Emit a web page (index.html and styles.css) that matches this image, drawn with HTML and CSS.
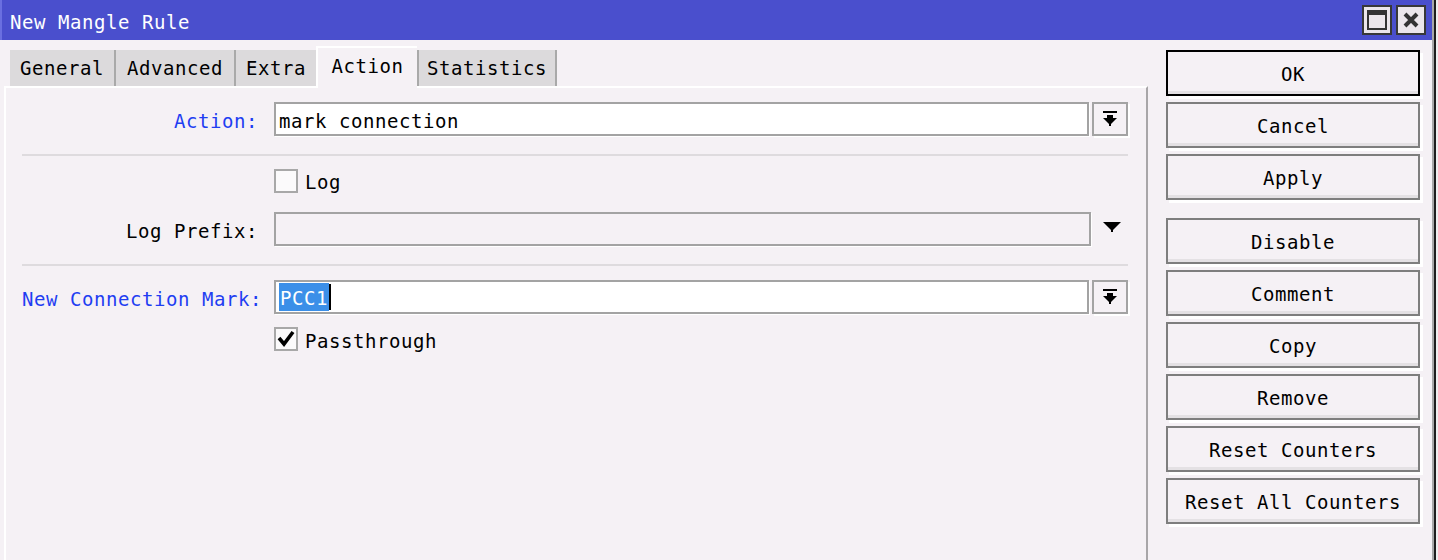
FILE: index.html
```html
<!DOCTYPE html>
<html>
<head>
<meta charset="utf-8">
<title>New Mangle Rule</title>
<link rel="stylesheet" href="styles.css">
</head>
<body>
<div class="screen">
  <div class="window">
    <div class="titlebar">
      <span class="title">New Mangle Rule</span>
      <div class="tb-btns">
        <span class="tb-btn">
          <svg width="20" height="20" viewBox="0 0 20 20"><path d="M1 1h18v18H1z" fill="none" stroke="#333" stroke-width="2"/><rect x="1" y="1" width="18" height="4" fill="#333"/></svg>
        </span>
        <span class="tb-btn">
          <svg width="16" height="16" viewBox="0 0 16 16"><path d="M2 2L14 14M14 2L2 14" stroke="#333" stroke-width="4"/></svg>
        </span>
      </div>
    </div>
    <div class="main">
      <div class="left">
        <div class="tabs">
          <span class="tab t-general">General</span>
          <span class="tab t-advanced">Advanced</span>
          <span class="tab t-extra">Extra</span>
          <span class="tab active">Action</span>
          <span class="tab t-stats">Statistics</span>
        </div>
        <div class="panel">
          <div class="row">
            <label class="lbl blue">Action:</label>
            <div class="field">
              <div class="input"><span class="txt">mark connection</span></div>
              <span class="dd-btn">
                <svg width="16" height="16" viewBox="0 0 16 16"><rect x="1" y="0" width="14" height="2" fill="#000"/><rect x="5" y="4" width="6" height="3" fill="#000"/><path d="M1 7H15L8 14Z" fill="#000"/><rect x="7" y="13" width="2" height="2" fill="#000"/></svg>
              </span>
            </div>
          </div>
          <div class="sep sep1"></div>
          <div class="row check-row">
            <span class="lbl"></span>
            <div class="check-field">
              <span class="checkbox"></span>
              <span class="check-text">Log</span>
            </div>
          </div>
          <div class="row prefix-row">
            <label class="lbl">Log Prefix:</label>
            <div class="field">
              <div class="input disabled wide"></div>
              <span class="dd-plain">
                <svg width="18" height="12" viewBox="0 0 18 12"><path d="M0 0H18L9 9Z" fill="#000"/><rect x="8" y="8" width="2" height="2" fill="#000"/></svg>
              </span>
            </div>
          </div>
          <div class="sep sep2"></div>
          <div class="row">
            <label class="lbl blue">New Connection Mark:</label>
            <div class="field">
              <div class="input"><span class="sel">PCC1</span><span class="caret"></span></div>
              <span class="dd-btn">
                <svg width="16" height="16" viewBox="0 0 16 16"><rect x="1" y="0" width="14" height="2" fill="#000"/><rect x="5" y="4" width="6" height="3" fill="#000"/><path d="M1 7H15L8 14Z" fill="#000"/><rect x="7" y="13" width="2" height="2" fill="#000"/></svg>
              </span>
            </div>
          </div>
          <div class="row check-row pass-row">
            <span class="lbl"></span>
            <div class="check-field">
              <span class="checkbox checked">
                <svg width="20" height="20" viewBox="0 0 20 20"><path d="M3 9L8 15L17 3" fill="none" stroke="#000" stroke-width="3.6"/></svg>
              </span>
              <span class="check-text">Passthrough</span>
            </div>
          </div>
        </div>
      </div>
      <div class="buttons">
        <span class="btn default">OK</span>
        <span class="btn">Cancel</span>
        <span class="btn">Apply</span>
        <span class="btn group">Disable</span>
        <span class="btn">Comment</span>
        <span class="btn">Copy</span>
        <span class="btn">Remove</span>
        <span class="btn">Reset Counters</span>
        <span class="btn">Reset All Counters</span>
      </div>
    </div>
  </div>
  <div class="edge"></div>
</div>
</body>
</html>
```
FILE: styles.css
```css
* { box-sizing: border-box; }
html, body { margin: 0; padding: 0; }
body {
  font-family: "DejaVu Sans Mono", "Liberation Mono", monospace;
  font-size: 19px;
  letter-spacing: 0.56px;
  color: #000;
  background: #f4f0f4;
}
.screen {
  display: flex;
  width: 1438px;
  height: 560px;
  overflow: hidden;
}
.window {
  width: 1432px;
  height: 560px;
  display: flex;
  flex-direction: column;
  background: #f5f1f5;
}
.titlebar {
  height: 40px;
  background: #4a4fcd;
  border-left: 2px solid #6a6fe0;
  display: flex;
  align-items: center;
  justify-content: space-between;
  padding: 0 6px 0 8px;
}
.title {
  color: #fff;
  line-height: 20px;
  padding-top: 3px;
}
.tb-btns {
  display: flex;
  gap: 4px;
}
.tb-btn {
  width: 30px;
  height: 30px;
  border: 2px solid #383838;
  background: #ebe6eb;
  display: flex;
  align-items: center;
  justify-content: center;
}
.main {
  flex: 1;
  display: flex;
}
.left {
  width: 1148px;
  padding-left: 4px;
  display: flex;
  flex-direction: column;
}
.tabs {
  height: 46px;
  display: flex;
  align-items: flex-end;
  padding-left: 6px;
}
.tab {
  height: 36px;
  line-height: 36px;
  padding: 0;
  text-align: center;
  background: #dcdadc;
  border-left: 2px solid #a9a9a9;
  white-space: nowrap;
}
.t-general { width: 104px; border-left: none; }
.t-advanced { width: 120px; }
.t-extra { width: 82px; }
.t-stats { width: 140px; border-right: 2px solid #a9a9a9; }
.tab.active {
  width: 101px;
  height: 42px;
  line-height: 36px;
  background: #f5f1f5;
  border-left: 2px solid #fff;
  border-top: 2px solid #fff;
  margin-bottom: -2px;
  position: relative;
  z-index: 1;
}
.panel {
  flex: 1;
  border-top: 2px solid #fff;
  border-left: 2px solid #fff;
  border-right: 2px solid #a8a6a8;
  padding: 14px 18px 0 16px;
  display: flex;
  flex-direction: column;
}
.row {
  display: grid;
  grid-template-columns: 236px 1fr;
  column-gap: 16px;
  align-items: center;
  height: 34px;
}
.lbl {
  text-align: right;
  white-space: nowrap;
  padding-top: 3px;
}
.lbl.blue { color: #1f3ef2; }
.field {
  display: flex;
  align-items: center;
  gap: 3px;
  height: 34px;
}
.input {
  width: 815px;
  height: 34px;
  border: 2px solid #a3a3a3;
  background: #fff;
  box-shadow: 1px 1px 0 #fff;
  padding-left: 3px;
  display: flex;
  align-items: center;
  white-space: nowrap;
}
.txt { padding-top: 3px; }
.input.disabled {
  background: #f5f1f5;
}
.input.wide { width: 817px; }
.sel {
  background: #3b8fe8;
  color: #fff;
  line-height: 26px;
  padding: 2px 1px 0;
}
.caret {
  width: 2px;
  height: 26px;
  background: #000;
}
.dd-btn {
  width: 36px;
  height: 34px;
  border: 2px solid #a3a3a3;
  background: #f5f1f5;
  box-shadow: 2px 2px 0 #fff;
  display: flex;
  align-items: center;
  justify-content: center;
}
.dd-plain {
  width: 36px;
  height: 34px;
  display: flex;
  align-items: center;
  justify-content: center;
  padding-bottom: 2px;
}
.sep {
  height: 2px;
  background: #dedbde;
}
.sep1 { margin: 18px 0 12px; }
.sep2 { margin: 18px 0 14px; }
.check-row { height: 24px; }
.prefix-row { margin-top: 20px; }
.pass-row { margin-top: 12px; height: 26px; }
.check-field {
  display: flex;
  align-items: center;
  gap: 7px;
}
.check-text { padding-top: 3px; }
.checkbox {
  width: 24px;
  height: 24px;
  border: 2px solid #a8a8a8;
  background: #fbfafb;
  display: flex;
  align-items: center;
  justify-content: center;
}
.buttons {
  padding: 10px 0 0 18px;
  display: flex;
  flex-direction: column;
  gap: 6px;
}
.btn {
  width: 254px;
  height: 46px;
  border: 2px solid #7e7e7e;
  background: #f5f1f5;
  box-shadow: inset 0 -3px 0 #e4e1e4, 3px 3px 0 #fff;
  display: flex;
  align-items: center;
  justify-content: center;
  white-space: nowrap;
  padding-top: 2px;
}
.btn.default { border-color: #000; }
.btn.group { margin-top: 12px; }
.edge {
  width: 6px;
  height: 560px;
  border-left: 2px solid #a8a8a8;
  border-right: 2px solid #efefef;
  background: #1e1e1e;
}
```
